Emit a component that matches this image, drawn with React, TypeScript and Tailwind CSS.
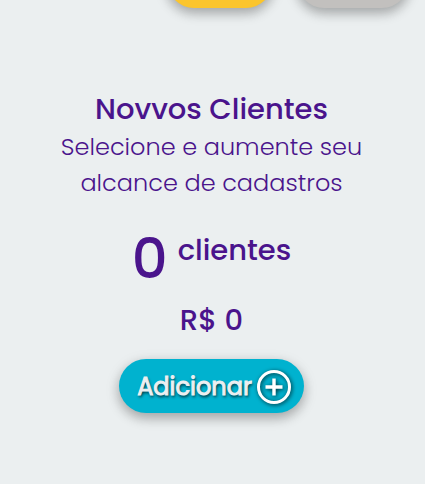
import React from "react";

function PlusCircle() {
  return (
    <svg
      viewBox="0 0 36 36"
      className="size-9 drop-shadow-[1px_1px_2px_rgba(0,0,0,0.75)]"
      fill="none"
      stroke="#ffffff"
      aria-hidden="true"
    >
      <circle cx="18" cy="18" r="15.5" strokeWidth="3" />
      <path d="M18 9.5v17M9.5 18h17" strokeWidth="3.4" />
    </svg>
  );
}

const pill =
  "h-[54px] shrink-0 rounded-full shadow-[0_5px_11px_0_rgba(0,0,0,0.22),0_4px_15px_0_rgba(0,0,0,0.13)]";

export default function App() {
  return (
    <main className="min-h-screen overflow-hidden bg-[#ebeff0] text-center font-['Poppins','Inter',sans-serif] text-[#4a148c]">
      <div className="-mt-[46px] flex justify-end gap-6 pr-4">
        <button type="button" className={`${pill} w-[106px] bg-[#fbc52d]`} />
        <button type="button" className={`${pill} w-[112px] bg-[#c2c0be]`} />
      </div>

      <section className="flex flex-col items-center pt-[81px] pr-6 pb-12 pl-[22px]">
        <h1 className="text-[29px] leading-10 font-medium">Novvos Clientes</h1>
        <p className="max-w-[320px] text-2xl leading-9 font-light">
          Selecione e aumente seu alcance de cadastros
        </p>
        <div className="mt-[25px] flex items-start gap-2.5">
          <span className="text-[56px] leading-[66px] font-medium">0</span>
          <span className="pt-1 text-[29px] leading-10 font-medium">
            clientes
          </span>
        </div>
        <p className="mt-2 text-[29px] leading-10 font-medium">R$ 0</p>
        <button
          type="button"
          className={`${pill} mt-[19px] flex items-center gap-1 bg-[#00b2cf] pt-0.5 pr-3 pl-[18px] text-2xl font-normal text-[#eceff1] [-webkit-text-stroke:1px_#eceff1] [text-shadow:1px_2px_3px_rgba(0,0,0,0.8)]`}
        >
          Adicionar
          <PlusCircle />
        </button>
      </section>
    </main>
  );
}
